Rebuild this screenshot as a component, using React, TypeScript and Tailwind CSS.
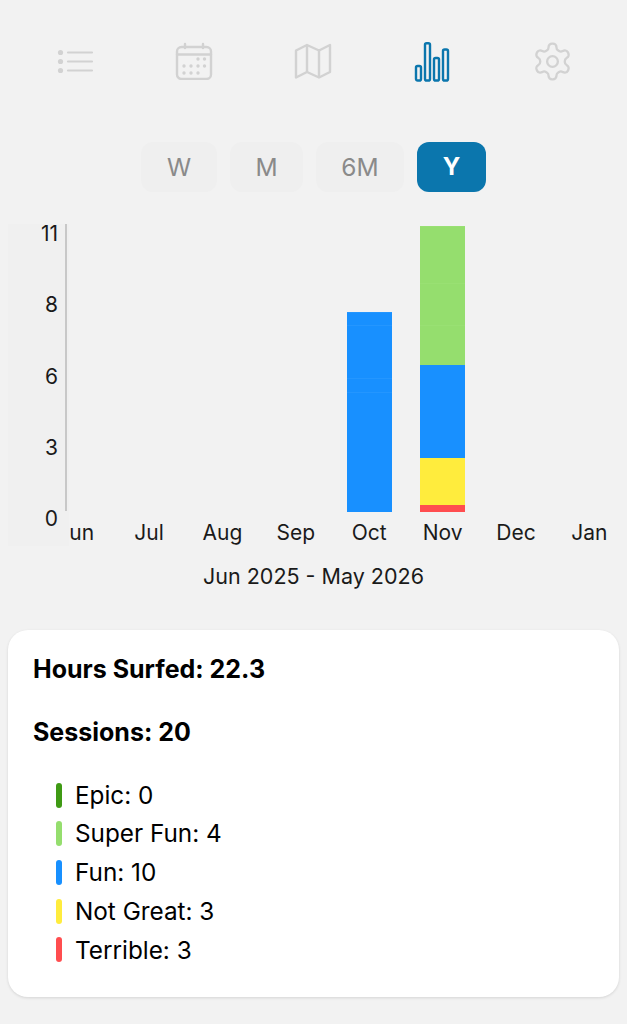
const inter = "[font-family:Inter,'Liberation_Sans',sans-serif]";

const IconList = () => (
  <svg width="38" height="38" viewBox="0 0 38 38" fill="none" stroke="#d2d2d2" strokeWidth="2.2" strokeLinecap="round">
    <path d="M12 10.5h24M12 19.5h24M12 28.5h24" />
    <circle cx="4.5" cy="10.5" r="2.6" fill="#d2d2d2" stroke="none" />
    <circle cx="4.5" cy="19.5" r="2.6" fill="#d2d2d2" stroke="none" />
    <circle cx="4.5" cy="28.5" r="2.6" fill="#d2d2d2" stroke="none" />
  </svg>
);

const IconCalendar = () => (
  <svg width="38" height="38" viewBox="0 0 38 38" fill="none" stroke="#d2d2d2" strokeWidth="2.4" strokeLinecap="round">
    <rect x="2" y="5" width="34" height="32" rx="4.5" />
    <path d="M2 12.5h34M10 2v4M28 2v4" />
    <g fill="#d2d2d2" stroke="none">
      <circle cx="23" cy="17" r="1.7" /><circle cx="29.5" cy="17" r="1.7" />
      <circle cx="9" cy="24" r="1.7" /><circle cx="16" cy="24" r="1.7" /><circle cx="23" cy="24" r="1.7" /><circle cx="29.5" cy="24" r="1.7" />
      <circle cx="9" cy="31" r="1.7" /><circle cx="16" cy="31" r="1.7" /><circle cx="23" cy="31" r="1.7" />
    </g>
  </svg>
);

const IconMap = () => (
  <svg width="38" height="38" viewBox="0 0 38 38" fill="none" stroke="#d2d2d2" strokeWidth="2.4" strokeLinejoin="round">
    <path d="M2 8.5 13 3l12 5.5L36 3v27l-11 5.5L13 30 2 35.5z" />
    <path d="M13 3v27M25 8.5v27" />
  </svg>
);

const IconBars = () => (
  <svg width="38" height="40" viewBox="0 0 38 40" fill="none" stroke="#0b76ad" strokeWidth="2.4">
    <rect x="2" y="24" width="5" height="14.5" rx="1.6" />
    <rect x="11" y="1.2" width="5" height="37.3" rx="1.6" />
    <rect x="20" y="16" width="5" height="22.5" rx="1.6" />
    <rect x="29" y="7.5" width="5" height="31" rx="1.6" />
  </svg>
);

const IconGear = () => (
  <svg className="-mt-[2px] -mx-[2px]" width="43" height="43" viewBox="0 0 24 24" fill="none" stroke="#d2d2d2" strokeWidth="1.3" strokeLinecap="round" strokeLinejoin="round">
    <path d="M12.22 2h-.44a2 2 0 0 0-2 2v.18a2 2 0 0 1-1 1.73l-.43.25a2 2 0 0 1-2 0l-.15-.08a2 2 0 0 0-2.73.73l-.22.38a2 2 0 0 0 .73 2.73l.15.1a2 2 0 0 1 1 1.72v.51a2 2 0 0 1-1 1.74l-.15.09a2 2 0 0 0-.73 2.73l.22.38a2 2 0 0 0 2.73.73l.15-.08a2 2 0 0 1 2 0l.43.25a2 2 0 0 1 1 1.73V20a2 2 0 0 0 2 2h.44a2 2 0 0 0 2-2v-.18a2 2 0 0 1 1-1.73l.43-.25a2 2 0 0 1 2 0l.15.08a2 2 0 0 0 2.73-.73l.22-.39a2 2 0 0 0-.73-2.73l-.15-.08a2 2 0 0 1-1-1.74v-.5a2 2 0 0 1 1-1.74l.15-.09a2 2 0 0 0 .73-2.73l-.22-.38a2 2 0 0 0-2.73-.73l-.15.08a2 2 0 0 1-2 0l-.43-.25a2 2 0 0 1-1-1.73V4a2 2 0 0 0-2-2z" />
    <circle cx="12" cy="12" r="3" />
  </svg>
);

const blue = "bg-[#1890ff] border-t border-[#2496ff]";
const green = "bg-[#95de6e] border-t border-[#99e073]";

const months = [
  { label: "Jun", segments: [] },
  { label: "Jul", segments: [] },
  { label: "Aug", segments: [] },
  { label: "Sep", segments: [] },
  {
    label: "Oct",
    segments: [
      { color: blue, height: "h-[13px]" },
      { color: blue, height: "h-[53px]" },
      { color: blue, height: "h-[14px]" },
      { color: blue, height: "h-[119.5px]" },
    ],
  },
  {
    label: "Nov",
    segments: [
      { color: green, height: "h-[57px]" },
      { color: green, height: "h-[42px]" },
      { color: green, height: "h-[40px]" },
      { color: "bg-[#1890ff]", height: "h-[93px]" },
      { color: "bg-[#ffec3d]", height: "h-[46.5px]" },
      { color: "bg-[#ff4d4f]", height: "h-[7px]" },
    ],
  },
  { label: "Dec", segments: [] },
  { label: "Jan", segments: [] },
];

const ranges = [
  { label: "W", width: "w-[76px]" },
  { label: "M", width: "w-[73px]" },
  { label: "6M", width: "w-[88px]" },
];

const legend = [
  { label: "Epic: 0", color: "bg-[#3f9a14]" },
  { label: "Super Fun: 4", color: "bg-[#95de6e]" },
  { label: "Fun: 10", color: "bg-[#1890ff]" },
  { label: "Not Great: 3", color: "bg-[#ffec3d]" },
  { label: "Terrible: 3", color: "bg-[#ff4d4f]" },
];

export default function App() {
  return (
    <div className={`${inter} w-[627px] h-[1024px] overflow-hidden bg-[#f2f2f2] text-black`}>
      <nav className="grid grid-cols-5 px-[15px] pt-[42px] h-[142px] justify-items-center items-start">
        <IconList />
        <IconCalendar />
        <IconMap />
        <IconBars />
        <IconGear />
      </nav>

      <div className="flex justify-center gap-[13px] h-[50px]">
        {ranges.map((r) => (
          <div key={r.label} className={`${r.width} flex items-center justify-center rounded-xl bg-[#efefef] text-[24.5px] text-[#8a8a8a]`}>
            {r.label}
          </div>
        ))}
        <div className="w-[69px] flex items-center justify-center rounded-xl bg-[#0b76ad] text-2xl font-bold text-white">Y</div>
      </div>

      <div className="relative mt-[32px] h-[322px] pl-[66px]">
        <div className="flex -ml-[27px]">
          {months.map((m) => (
            <div key={m.label} className="w-[73.4px] shrink-0 flex flex-col items-center">
              <div className="h-[287.5px] flex flex-col justify-end w-[45px]">
                {m.segments.map((s, i) => (
                  <div key={i} className={`${s.color} ${s.height}`} />
                ))}
              </div>
              <div className="mt-[9px] text-[21px] leading-6 text-[#1a1a1a]">{m.label}</div>
            </div>
          ))}
        </div>
        <div className="absolute left-[8px] top-0 w-[61px] h-[322px] bg-[#f0f0f0]">
          <div className="absolute left-[57px] top-0 w-[2px] h-[287px] bg-[#c8c8c8]" />
          <div className="w-[50px] h-[305px] flex flex-col justify-between items-end text-[21px] leading-5 text-[#1a1a1a]">
            <span>11</span>
            <span>8</span>
            <span>6</span>
            <span>3</span>
            <span>0</span>
          </div>
        </div>
      </div>

      <div className="mt-[18px] text-center text-[21.5px] leading-6 text-[#1a1a1a]">Jun 2025 - May 2026</div>

      <section className="mx-[8px] mt-[42px] h-[367px] rounded-[20px] bg-white pl-[25px] pt-[24px] shadow-[0_1px_3px_rgba(0,0,0,0.12)]">
        <p className="text-[25px] leading-[30px] font-bold">Hours Surfed: 22.3</p>
        <p className="mt-[33px] text-[25px] leading-[30px] font-bold">Sessions: 20</p>
        <ul className="mt-[33px] ml-[23px] flex flex-col gap-[8.7px]">
          {legend.map((l) => (
            <li key={l.label} className="flex items-center gap-[13px] h-[30px] text-[24.3px]">
              <span className={`${l.color} w-[6px] h-[25px] rounded-[3px]`} />
              {l.label}
            </li>
          ))}
        </ul>
      </section>
    </div>
  );
}
